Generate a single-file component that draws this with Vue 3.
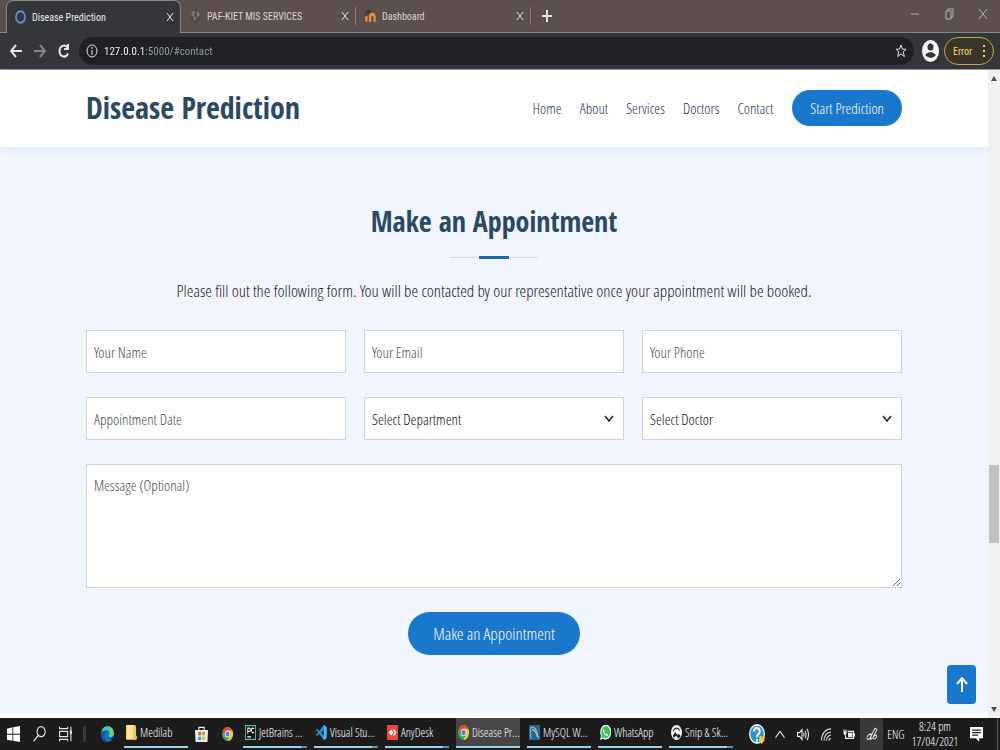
<template>
  <div class="desktop">
    <svg class="symbols" aria-hidden="true">
      <symbol id="windows" viewBox="0 0 24 24" preserveAspectRatio="none">
        <path fill="#fff" d="M0 4l10-2v9.500H0zM11.500 1.700L24 0v11.500H11.500zM0 13h10v9L0 20.500zM11.500 13H24v11l-12.500-1.800z" />
      </symbol>
      <symbol id="search" viewBox="0 0 24 24" preserveAspectRatio="none">
        <g fill="none" stroke="#e8e8e8" stroke-width="2"><ellipse cx="15" cy="8.500" rx="7.500" ry="7.500" /><path d="M10 14L1 23" /></g>
      </symbol>
      <symbol id="taskview" viewBox="0 0 24 24" preserveAspectRatio="none">
        <g fill="none" stroke="#e8e8e8" stroke-width="2"><path d="M1 1v3h15V1M1 23v-3h15v3M1 8h15v8H1zM22 1v22" /><path stroke-width="4" d="M22 7v5" /></g>
      </symbol>
      <symbol id="edge" viewBox="0 0 24 24" preserveAspectRatio="none">
        <circle cx="12" cy="12" r="12" fill="#1479c9" />
        <path fill="#3fc6ad" d="M1 8C4-1 19-3 23 8c2 6-3 9-7 8-2-1-1-2 0-4 1-4-3-6-7-5-4 0-6 1-8 1z" />
        <path fill="#79d55c" d="M15 1c7 2 10 8 8 12-2 3-5 3-7 3-2-1-1-2 0-4 1-5 0-8-1-11z" />
        <path fill="#1157a3" d="M8 11c-3 4 0 11 6 12-8 2-13-3-14-9 0-4 4-7 8-7 5 0 7 2 7 4-2-2-5-2-7 0z" />
        <path fill="#1c1c1c" d="M11 11c-2 3 0 7 5 8 3 0 5-1 7-2l-1 2c-8 3-14-3-11-8z" />
      </symbol>
      <symbol id="folder" viewBox="0 0 24 24" preserveAspectRatio="none">
        <path fill="#f5c955" d="M0 0h20l2 3v20H0z" /><path fill="#ffe399" d="M2 0h14v23H2z" /><path fill="#e9b945" d="M16 19l8-2v5l-3 2h-5z" />
      </symbol>
      <symbol id="store" viewBox="0 0 24 24" preserveAspectRatio="none">
        <path fill="none" stroke="#eee" stroke-width="2" d="M7 7V2h10v5" /><path fill="#eee" d="M0 6h24l-1 18H1z" />
        <path fill="#e65025" d="M6 9h5v5H6z" /><path fill="#7bb829" d="M13 9h5v5h-5z" /><path fill="#209fdc" d="M6 16h5v5H6z" /><path fill="#edb61c" d="M13 16h5v5h-5z" />
      </symbol>
      <symbol id="chrome" viewBox="0 0 24 24" preserveAspectRatio="none">
        <circle cx="12" cy="12" r="12" fill="#43a254" /><path fill="#df4b3e" d="M1.600 6A12 12 0 0122.400 6H12l-5 9z" />
        <path fill="#f3c63b" d="M22.400 6A12 12 0 0112 24l5-9-5-9z" /><circle cx="12" cy="12" r="6" fill="#f5f5f5" /><circle cx="12" cy="12" r="4.500" fill="#4b83dc" />
      </symbol>
      <symbol id="pycharm" viewBox="0 0 24 24" preserveAspectRatio="none">
        <path fill="#111" stroke="#41c98d" stroke-width="2" d="M1 1h22v22H1z" />
        <g fill="none" stroke="#fff" stroke-width="2"><path d="M6 14V5h3q3 0 3 2.500T9 10H6M20 6q-5-3-6 2 0 6 6 4M5 19h8" /></g>
      </symbol>
      <symbol id="vscode" viewBox="0 0 24 24" preserveAspectRatio="none">
        <path fill="#2593d8" d="M17 0l6 3v18l-6 3L7 14l-5 4-2-2 5-4-5-4 2-2 5 4zm0 7l-6 5 6 5z" /><path fill="#51b5f0" d="M17 0l6 3v18l-6 3z" />
      </symbol>
      <symbol id="anydesk" viewBox="0 0 24 24" preserveAspectRatio="none">
        <path fill="#ec453d" d="M0 0h24v24H0z" /><path fill="#fff" d="M9 7l5 5-5 5-5-5zM13 8l2-2 6 6-6 6-2-2 4-4z" />
      </symbol>
      <symbol id="mysql" viewBox="0 0 24 24" preserveAspectRatio="none">
        <path fill="#2d6489" d="M0 0h24v24H0z" /><path fill="none" stroke="#b4d2e6" stroke-width="1.700" d="M4 22C5 14 1 7 5 4s13 3 14 13l3 4M7 7c6 2 10 6 11 12" />
      </symbol>
      <symbol id="whatsapp" viewBox="0 0 24 24" preserveAspectRatio="none">
        <path fill="#fff" d="M0 24l2-7a12 12 0 115 5z" /><path fill="#35c65a" d="M3 21l1-5a9.700 9.700 0 114 4z" />
        <path fill="#fff" d="M8 6c-3 2-1 6 2 9s6 4 8 1l-3-3-2 2c-2-1-3-2-4-4l1-2z" />
      </symbol>
      <symbol id="snip" viewBox="0 0 24 24" preserveAspectRatio="none">
        <circle cx="12" cy="12" r="12" fill="#f3f3f3" /><path fill="none" stroke="#222" stroke-width="2" d="M5 10q2-5 7-5 5 0 7 4" />
        <path fill="#222" d="M4 17l5-6 5 5 3-2 4 4-4 3H7z" /><path fill="#f3f3f3" d="M7 20l4-3 4 3-4 4z" />
      </symbol>
      <symbol id="help" viewBox="0 0 24 24" preserveAspectRatio="none">
        <circle cx="12" cy="12" r="11" fill="#2795ce" stroke="#e8f5fc" stroke-width="2" />
        <path fill="none" stroke="#fff" stroke-width="3" d="M7.500 9c0-6 9-5 8.500 0 0 3-4 3-4 7M12 18v3" /><path fill="#f6c445" d="M16 14l7 2v4l-4 4-4-4z" />
      </symbol>
      <symbol id="caret" viewBox="0 0 24 24" preserveAspectRatio="none"><path fill="none" stroke="#eee" stroke-width="2" d="M3 17l9-10 9 10" /></symbol>
      <symbol id="volume" viewBox="0 0 24 24" preserveAspectRatio="none">
        <path fill="none" stroke="#eee" stroke-width="2" d="M1 9h4l5-5v16l-5-5H1zM13 9q2 3 0 6M16 6q4 6 0 12M20 3q6 9 0 18" />
      </symbol>
      <symbol id="wifi" viewBox="0 0 24 24" preserveAspectRatio="none">
        <g fill="none" stroke="#d8d8d8" stroke-width="2"><path d="M3 21C3 10 12 3 22 3M8 22C8 14 14 8 22 8M13 22c0-5 4-9 9-9" /><path d="M18 22c0-2 2-4 4-4" /></g>
      </symbol>
      <symbol id="battery" viewBox="0 0 24 24" preserveAspectRatio="none">
        <path fill="none" stroke="#eee" stroke-width="2" d="M9 7h12v11H5v-5M23 10v5" /><path fill="#eee" d="M10 9h9v7h-9zM1 4h2v3h2V4h2v6l-2 3H3l-2-3z" />
      </symbol>
      <symbol id="pen" viewBox="0 0 24 24" preserveAspectRatio="none">
        <path fill="none" stroke="#eee" stroke-width="1.700" d="M10 15L18 2l4 2-8 13-5 3zM10 12c-6-2-11 7-6 8 5 0 8-10 5-10M15 18c2 3 7-1 6-4-1-2-4-1-4 1" />
      </symbol>
      <symbol id="notice" viewBox="0 0 24 24" preserveAspectRatio="none">
        <path fill="#fff" d="M0 0h24v18h-7v6l-6-6H0z" /><path stroke="#1c1c1c" stroke-width="2" d="M4 5h16M4 9h16M4 13h11" />
      </symbol>
      <symbol id="ring" viewBox="0 0 24 24" preserveAspectRatio="none"><circle cx="12" cy="12" r="10" fill="none" stroke="#5b91dc" stroke-width="3.500" /></symbol>
      <symbol id="globe" viewBox="0 0 24 24" preserveAspectRatio="none">
        <circle cx="12" cy="12" r="12" fill="#50494a" /><path fill="#7d7473" d="M3 6l6-4 3 4-4 3 2 3 4 2-3 7-3-3-1-5-4-2zM15 3l6 4v5l-4 2-3-4z" />
      </symbol>
      <symbol id="moodle" viewBox="0 0 24 24" preserveAspectRatio="none">
        <path fill="none" stroke="#ef8b3b" stroke-width="5" d="M3 22V12M11 22v-8q0-5 5-5t5 5v8" /><path fill="#3e3533" d="M0 6l9-5 5 3-6 4-5-1v6H1z" />
      </symbol>
    </svg>

    <header class="browser">
      <div class="tab-strip">
        <div v-for="tab in tabs" :key="tab.title" :class="['tab', { active: tab.active }]">
          <svg class="tab-icon"><use :href="'#' + tab.icon" /></svg>
          <span class="tab-title">{{ tab.title }}</span>
          <button class="tab-close" :aria-label="'Close ' + tab.title">
            <svg viewBox="0 0 8 10"><path d="M1 1l6 8M7 1L1 9" /></svg>
          </button>
        </div>
        <button class="new-tab" aria-label="New tab"><svg viewBox="0 0 10 12"><path d="M5 0v12M0 6h10" /></svg></button>
        <div class="window-controls">
          <button aria-label="Minimize"><svg viewBox="0 0 10 12"><path d="M1 6h8" /></svg></button>
          <button aria-label="Restore"><svg viewBox="0 0 10 12"><path d="M2 3h5v8H2zM4 3V1h5v8H7" /></svg></button>
          <button aria-label="Close"><svg viewBox="0 0 10 12"><path d="M1 1l8 10M9 1L1 11" /></svg></button>
        </div>
      </div>
      <div class="toolbar">
        <button class="tool" aria-label="Back"><svg viewBox="0 0 12 14"><path d="M12 7H2M6 1L1 7l5 6" /></svg></button>
        <button class="tool dim" aria-label="Forward"><svg viewBox="0 0 12 14"><path d="M0 7h10M6 1l5 6-5 6" /></svg></button>
        <button class="tool" aria-label="Reload"><svg viewBox="0 0 12 14"><path d="M9.500 3.500C7 0 1.500 1.500 1.500 7s6 8 8.500 2.500M10 0v5H6" /></svg></button>
        <div class="address-bar">
          <svg class="info" viewBox="0 0 12 14"><ellipse cx="6" cy="7" rx="5" ry="6" /><path d="M6 6v5M6 3v2" /></svg>
          <input v-model="address" class="address" type="text" aria-label="Address" />
          <button class="star" aria-label="Bookmark">
            <svg viewBox="0 0 12 14"><path d="M6 1l1.500 4.200H11L8.300 8l1 4.500L6 10l-3.300 2.500 1-4.500L1 5.200h3.500z" /></svg>
          </button>
        </div>
        <button class="profile" aria-label="Profile">
          <svg viewBox="0 0 17 22"><ellipse cx="8.500" cy="11" rx="8.500" ry="11" fill="#f4f6f9" /><ellipse cx="8.500" cy="7" rx="3" ry="3.500" fill="#35363a" /><path fill="#35363a" d="M3 15q5.500-6 11 0-5 6-11 0z" /></svg>
        </button>
        <button class="error-menu">Error <svg viewBox="0 0 4 14"><path d="M1 1h2v2H1zM1 6h2v2H1zM1 11h2v2H1z" /></svg></button>
      </div>
    </header>

    <div class="viewport">
      <main class="page">
        <div class="site-header">
          <div class="container header-row">
            <h1 class="logo">Disease Prediction</h1>
            <nav class="nav">
              <a v-for="link in links" :key="link" :href="'#' + link.toLowerCase()">{{ link }}</a>
            </nav>
            <a class="start-btn" href="#prediction">Start Prediction</a>
          </div>
        </div>

        <section id="contact" class="appointment">
          <div class="container">
            <h2 class="section-title">Make an Appointment</h2>
            <div class="divider"></div>
            <p class="section-text">Please fill out the following form. You will be contacted by our representative once your appointment will be booked.</p>
            <form @submit.prevent>
              <div class="fields">
                <input v-for="field in fields" :key="field.label" :type="field.type" class="field" :placeholder="field.label" :aria-label="field.label" />
                <div v-for="label in selects" :key="label" class="select-wrap">
                  <select class="field" :aria-label="label"><option>{{ label }}</option></select>
                  <svg viewBox="0 0 10 8"><path d="M1 1l4 5 4-5" /></svg>
                </div>
              </div>
              <textarea class="field message" placeholder="Message (Optional)" aria-label="Message"></textarea>
              <button class="submit-btn" type="submit">Make an Appointment</button>
            </form>
          </div>
        </section>
        <a class="back-to-top" href="#" aria-label="Back to top">
          <svg viewBox="0 0 12 16"><path d="M6 15V2M1 7l5-6 5 6" /></svg>
        </a>
      </main>
      <div class="scrollbar">
        <svg viewBox="0 0 6 5"><path d="M3 0l3 5H0z" /></svg>
        <div class="thumb" :style="{ top: scroll.top + '%', height: scroll.size + '%' }"></div>
        <svg viewBox="0 0 6 5"><path d="M3 5L0 0h6z" /></svg>
      </div>
    </div>

    <footer class="taskbar">
      <button v-for="icon in ['windows', 'search', 'taskview']" :key="icon" class="launcher" :aria-label="icon">
        <svg><use :href="'#' + icon" /></svg>
      </button>
      <span class="separator"></span>
      <button class="launcher wide" aria-label="Edge"><svg><use href="#edge" /></svg></button>
      <button class="task"><svg><use href="#folder" /></svg><span>Medilab</span></button>
      <button class="launcher" aria-label="Store"><svg><use href="#store" /></svg></button>
      <button class="launcher" aria-label="Chrome"><svg class="small"><use href="#chrome" /></svg></button>
      <div class="tasks">
        <button v-for="task in tasks" :key="task.title" :class="['task', { active: task.active, stacked: task.stacked }]">
          <svg><use :href="'#' + task.icon" /></svg><span>{{ task.title }}</span>
        </button>
      </div>
      <div class="tray">
        <button v-for="icon in tray" :key="icon" :class="['tray-btn', icon]" :aria-label="icon"><svg><use :href="'#' + icon" /></svg></button>
        <span class="lang">ENG</span>
        <span class="clock">8:24 pm<br />17/04/2021</span>
        <button class="notice-btn" aria-label="Notifications"><svg><use href="#notice" /></svg></button>
      </div>
    </footer>
  </div>
</template>

<script setup>
import { ref } from 'vue'

const address = ref('127.0.0.1:5000/#contact')

const tabs = [
  { title: 'Disease Prediction', icon: 'ring', active: true },
  { title: 'PAF-KIET MIS SERVICES', icon: 'globe' },
  { title: 'Dashboard', icon: 'moodle' }
]

const links = ['Home', 'About', 'Services', 'Doctors', 'Contact']

const fields = [
  { label: 'Your Name', type: 'text' },
  { label: 'Your Email', type: 'email' },
  { label: 'Your Phone', type: 'tel' },
  { label: 'Appointment Date', type: 'text' }
]

const selects = ['Select Department', 'Select Doctor']

const scroll = { top: 61, size: 12 }

const tasks = [
  { title: 'JetBrains ...', icon: 'pycharm', stacked: true },
  { title: 'Visual Stu...', icon: 'vscode', stacked: true },
  { title: 'AnyDesk', icon: 'anydesk', stacked: true },
  { title: 'Disease Pr...', icon: 'chrome', active: true },
  { title: 'MySQL W...', icon: 'mysql' },
  { title: 'WhatsApp', icon: 'whatsapp' },
  { title: 'Snip & Sk...', icon: 'snip', stacked: true }
]

const tray = ['help', 'caret', 'volume', 'wifi', 'battery', 'pen']
</script>

<style>
body {
  margin: 0;
}
</style>

<style scoped>
* {
  box-sizing: border-box;
}

.desktop {
  display: flex;
  flex-direction: column;
  min-height: 100vh;
  font-family: 'Open Sans Condensed Light', 'Roboto Condensed', 'Open Sans', sans-serif;
}

.symbols {
  position: absolute;
  width: 0;
  height: 0;
}

button {
  padding: 0;
  border: none;
  background: none;
  color: inherit;
  font: inherit;
}

svg {
  display: block;
  flex: none;
}

a {
  text-decoration: none;
}

/* browser */
.browser {
  background: #35363a;
  border-bottom: 1px solid #999;
  font-family: 'Roboto Condensed', 'Open Sans', sans-serif;
}

.tab-strip {
  display: flex;
  height: 33px;
  padding-left: 6px;
  background: #5c504e;
  border-bottom: 1px solid #8b8482;
}

.tab {
  display: flex;
  align-items: center;
  gap: 6px;
  width: 175px;
  padding: 0 7px 0 9px;
  color: #d8d3d1;
  font-size: 10px;
  background: linear-gradient(#857a78, #857a78) right center / 1px 18px no-repeat;
}

.tab.active {
  height: 33px;
  padding: 0 6px 0 8px;
  color: #e8eaed;
  background: #35363a;
  border: 1px solid #8b8482;
  border-bottom: none;
  border-radius: 7px 7px 0 0;
}

.tab-icon {
  width: 11px;
  height: 14px;
}

.tab-title {
  flex: 1;
  white-space: nowrap;
}

.tab-close svg {
  width: 8px;
  height: 10px;
}

.tab-strip path,
.tool path,
.info,
.star path {
  fill: none;
  stroke: #e6e3e2;
}

.new-tab {
  width: 32px;
}

.new-tab svg {
  width: 10px;
  height: 12px;
  margin: 0 auto;
}

.new-tab path {
  stroke-width: 2;
}

.window-controls {
  display: flex;
  align-items: center;
  height: 28px;
  margin-left: auto;
}

.window-controls button {
  width: 34px;
}

.window-controls svg {
  width: 10px;
  height: 12px;
  margin: 0 auto;
}

.window-controls path {
  stroke: #b5aeac;
}

.toolbar {
  display: flex;
  align-items: center;
  height: 36px;
  padding: 0 6px 0 4px;
}

.tool {
  width: 24px;
}

.tool svg {
  width: 12px;
  height: 14px;
  margin: 0 auto;
}

.tool path {
  stroke-width: 2;
}

.tool.dim path {
  stroke: #85878b;
}

.address-bar {
  display: flex;
  flex: 1;
  align-items: center;
  gap: 6px;
  height: 28px;
  margin-left: 3px;
  padding: 0 7px;
  border-radius: 14px;
  background: #202124;
}

.info {
  width: 12px;
  height: 14px;
}

.address {
  flex: 1;
  min-width: 0;
  padding: 0;
  border: none;
  outline: none;
  font-family: inherit;
  font-size: 11px;
  color: transparent;
  /* host is bright, the rest of the address is dimmed */
  background: linear-gradient(90deg, #fff 41px, #9aa0a6 41px);
  background-clip: text;
}

.star svg {
  width: 12px;
  height: 14px;
}

.profile {
  margin: 0 5px 0 8px;
}

.profile svg {
  width: 17px;
  height: 22px;
}

.error-menu {
  display: flex;
  align-items: center;
  justify-content: space-between;
  width: 50px;
  height: 28px;
  padding: 0 7px 0 8px;
  border: 1px solid #c9a54c;
  border-radius: 14px;
  background: #3a352b;
  color: #fdd663;
  font-size: 10px;
}

.error-menu svg {
  width: 4px;
  height: 14px;
  fill: #fdd663;
}

/* page */
.viewport {
  display: flex;
  flex: 1;
}

.page {
  position: relative;
  flex: 1;
  padding-bottom: 5px;
  background: #fff;
}

.container {
  max-width: 1140px;
  margin: 0 auto;
  padding: 0 86px;
}

.site-header {
  position: relative;
  padding: 20px 0 21px;
  background: #fff;
  box-shadow: 0 2px 12px rgba(25, 119, 204, 0.1);
}

.header-row {
  display: flex;
  align-items: center;
}

.logo {
  margin: 0 auto 0 0;
  color: #2c4964;
  font-family: 'Open Sans Condensed', 'Open Sans', sans-serif;
  font-size: 30px;
  font-weight: 700;
  line-height: 36px;
}

.nav {
  display: flex;
  gap: 18px;
  margin-right: 19px;
}

.nav a {
  color: #1c3650;
  font-size: 15px;
}

.start-btn {
  padding: 0 18px;
  border-radius: 18px;
  background: #1977cc;
  color: #fff;
  font-size: 15px;
  line-height: 36px;
}

.appointment {
  padding: 54px 0 58px;
  background: #f1f6fe;
}

.section-title {
  margin: 0;
  color: #2c4964;
  font-family: 'Open Sans Condensed', 'Open Sans', sans-serif;
  font-size: 28px;
  font-weight: 700;
  line-height: 40px;
  text-align: center;
}

.divider {
  width: 88px;
  height: 3px;
  margin: 15px auto 20px;
  background:
    linear-gradient(#1b6ca8, #1b6ca8) center / 30px 3px no-repeat,
    linear-gradient(#d5dade, #d5dade) center / 88px 1px no-repeat;
}

.section-text {
  margin: 0 0 27px;
  color: #222;
  font-size: 17px;
  line-height: 24px;
  text-align: center;
}

.fields {
  display: grid;
  grid-template-columns: repeat(3, 1fr);
  gap: 24px 18px;
}

.field {
  display: block;
  width: 100%;
  height: 43px;
  padding: 0 7px;
  border: 1px solid #ced4da;
  border-radius: 0;
  outline: none;
  background: #fff;
  color: #111;
  font-family: inherit;
  font-size: 15px;
}

.field::placeholder {
  color: #464e55;
  opacity: 1;
}

select.field {
  appearance: none;
}

.select-wrap {
  position: relative;
}

.select-wrap svg {
  position: absolute;
  top: 18px;
  right: 10px;
  width: 10px;
  height: 8px;
  pointer-events: none;
}

.select-wrap path {
  fill: none;
  stroke: #222;
  stroke-width: 1.5;
}

.message {
  height: 124px;
  margin-top: 24px;
  padding: 10px 7px;
  resize: vertical;
}

.submit-btn {
  display: block;
  margin: 24px auto 0;
  padding: 0 25px;
  border-radius: 22px;
  background: #1977cc;
  color: #fff;
  font-size: 17px;
  line-height: 43px;
}

.back-to-top {
  position: absolute;
  right: 12px;
  bottom: 14px;
  display: grid;
  place-items: center;
  width: 29px;
  height: 39px;
  border-radius: 4px;
  background: #1977cc;
}

.back-to-top svg {
  width: 12px;
  height: 16px;
  fill: none;
  stroke: #fff;
  stroke-width: 2;
}

.scrollbar {
  position: relative;
  display: flex;
  flex-direction: column;
  align-items: center;
  justify-content: space-between;
  width: 12px;
  padding: 6px 0;
  background: #f1f1f1;
}

.scrollbar svg {
  width: 6px;
  height: 5px;
  fill: #505050;
}

.thumb {
  position: absolute;
  right: 1px;
  left: 1px;
  background: #c1c1c1;
}

/* taskbar */
.taskbar {
  display: flex;
  height: 32px;
  background: #1c1c1c;
  color: #fff;
}

.launcher {
  width: 26px;
}

.launcher.wide {
  width: 34px;
}

.launcher svg {
  width: 13px;
  height: 16px;
  margin: 0 auto;
}

.launcher .small {
  width: 11px;
  height: 14px;
}

.separator {
  width: 3px;
  height: 16px;
  margin: 8px 4px 0 5px;
  background: #3a3a3a;
}

.task {
  display: flex;
  align-items: center;
  gap: 3px;
  width: 64px;
  height: 30px;
  padding: 0 2px;
  border-bottom: 2px solid #9fd2ee;
  font-size: 12px;
  white-space: nowrap;
}

.task svg {
  width: 11px;
  height: 15px;
}

.task.active {
  background: #474747;
}

.task.stacked {
  border-image: linear-gradient(90deg, #9fd2ee 90%, #5d8db0 90%) 1;
  border-width: 0 0 2px;
}

.tasks {
  display: flex;
  gap: 7px;
  margin-left: 3px;
}

.tray {
  display: flex;
  align-items: center;
  margin-left: auto;
  margin-right: 2px;
  padding-right: 6px;
  border-right: 1px solid #555;
  font-size: 12px;
}

.tray-btn {
  width: 23px;
  height: 32px;
}

.tray-btn svg {
  width: 12px;
  height: 15px;
  margin: 0 auto;
}

.tray-btn.help svg {
  width: 16px;
  height: 20px;
}

.tray-btn.pen {
  background: #393939;
}

.lang {
  width: 26px;
  text-align: center;
}

.clock {
  width: 52px;
  line-height: 15px;
  text-align: center;
}

.notice-btn {
  width: 30px;
}

.notice-btn svg {
  width: 13px;
  height: 15px;
  margin: 0 auto;
}
</style>
